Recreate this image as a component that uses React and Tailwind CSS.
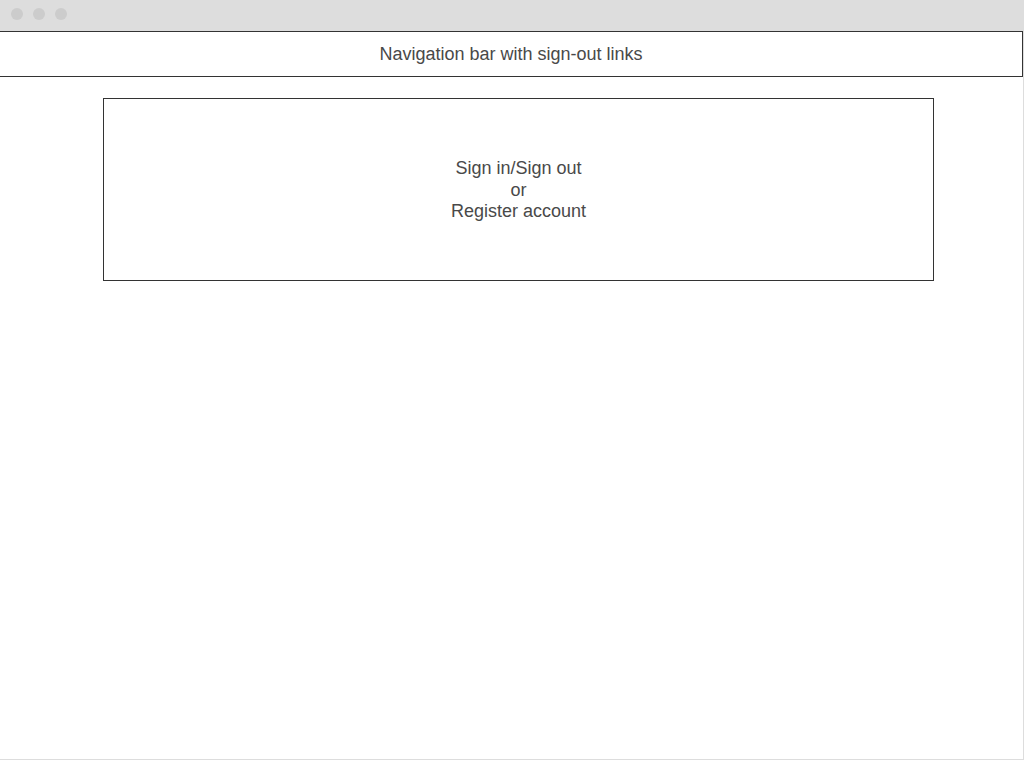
// Wireframe: browser chrome, nav bar and sign-in placeholder box

const Dot = () => <span className="block w-3 h-3 rounded-full bg-[#cccccc]" />;

export default function App() {
  return (
    <div
      className="w-[1024px] h-[760px] bg-white overflow-hidden flex flex-col text-[#494949]"
      style={{ fontFamily: '"Liberation Sans", Arial, sans-serif' }}
    >
      {/* Window chrome */}
      <div className="h-[31px] shrink-0 bg-[#dddddd] flex items-start gap-[10px] pt-[8px] pl-[11px]">
        <Dot />
        <Dot />
        <Dot />
      </div>

      {/* Page frame */}
      <div className="flex-1 flex flex-col border-r border-b border-[#dddddd]">
        <div className="h-[46px] -ml-px border border-[#333333] flex items-center justify-center text-[18px]">
          Navigation bar with sign-out links
        </div>

        <div className="mt-[21px] ml-[103px] w-[831px] h-[183px] pt-[2px] border border-[#333333] flex flex-col items-center justify-center text-[18px] leading-[21.5px] text-center">
          <span>Sign in/Sign out</span>
          <span>or</span>
          <span>Register account</span>
        </div>
      </div>
    </div>
  );
}
